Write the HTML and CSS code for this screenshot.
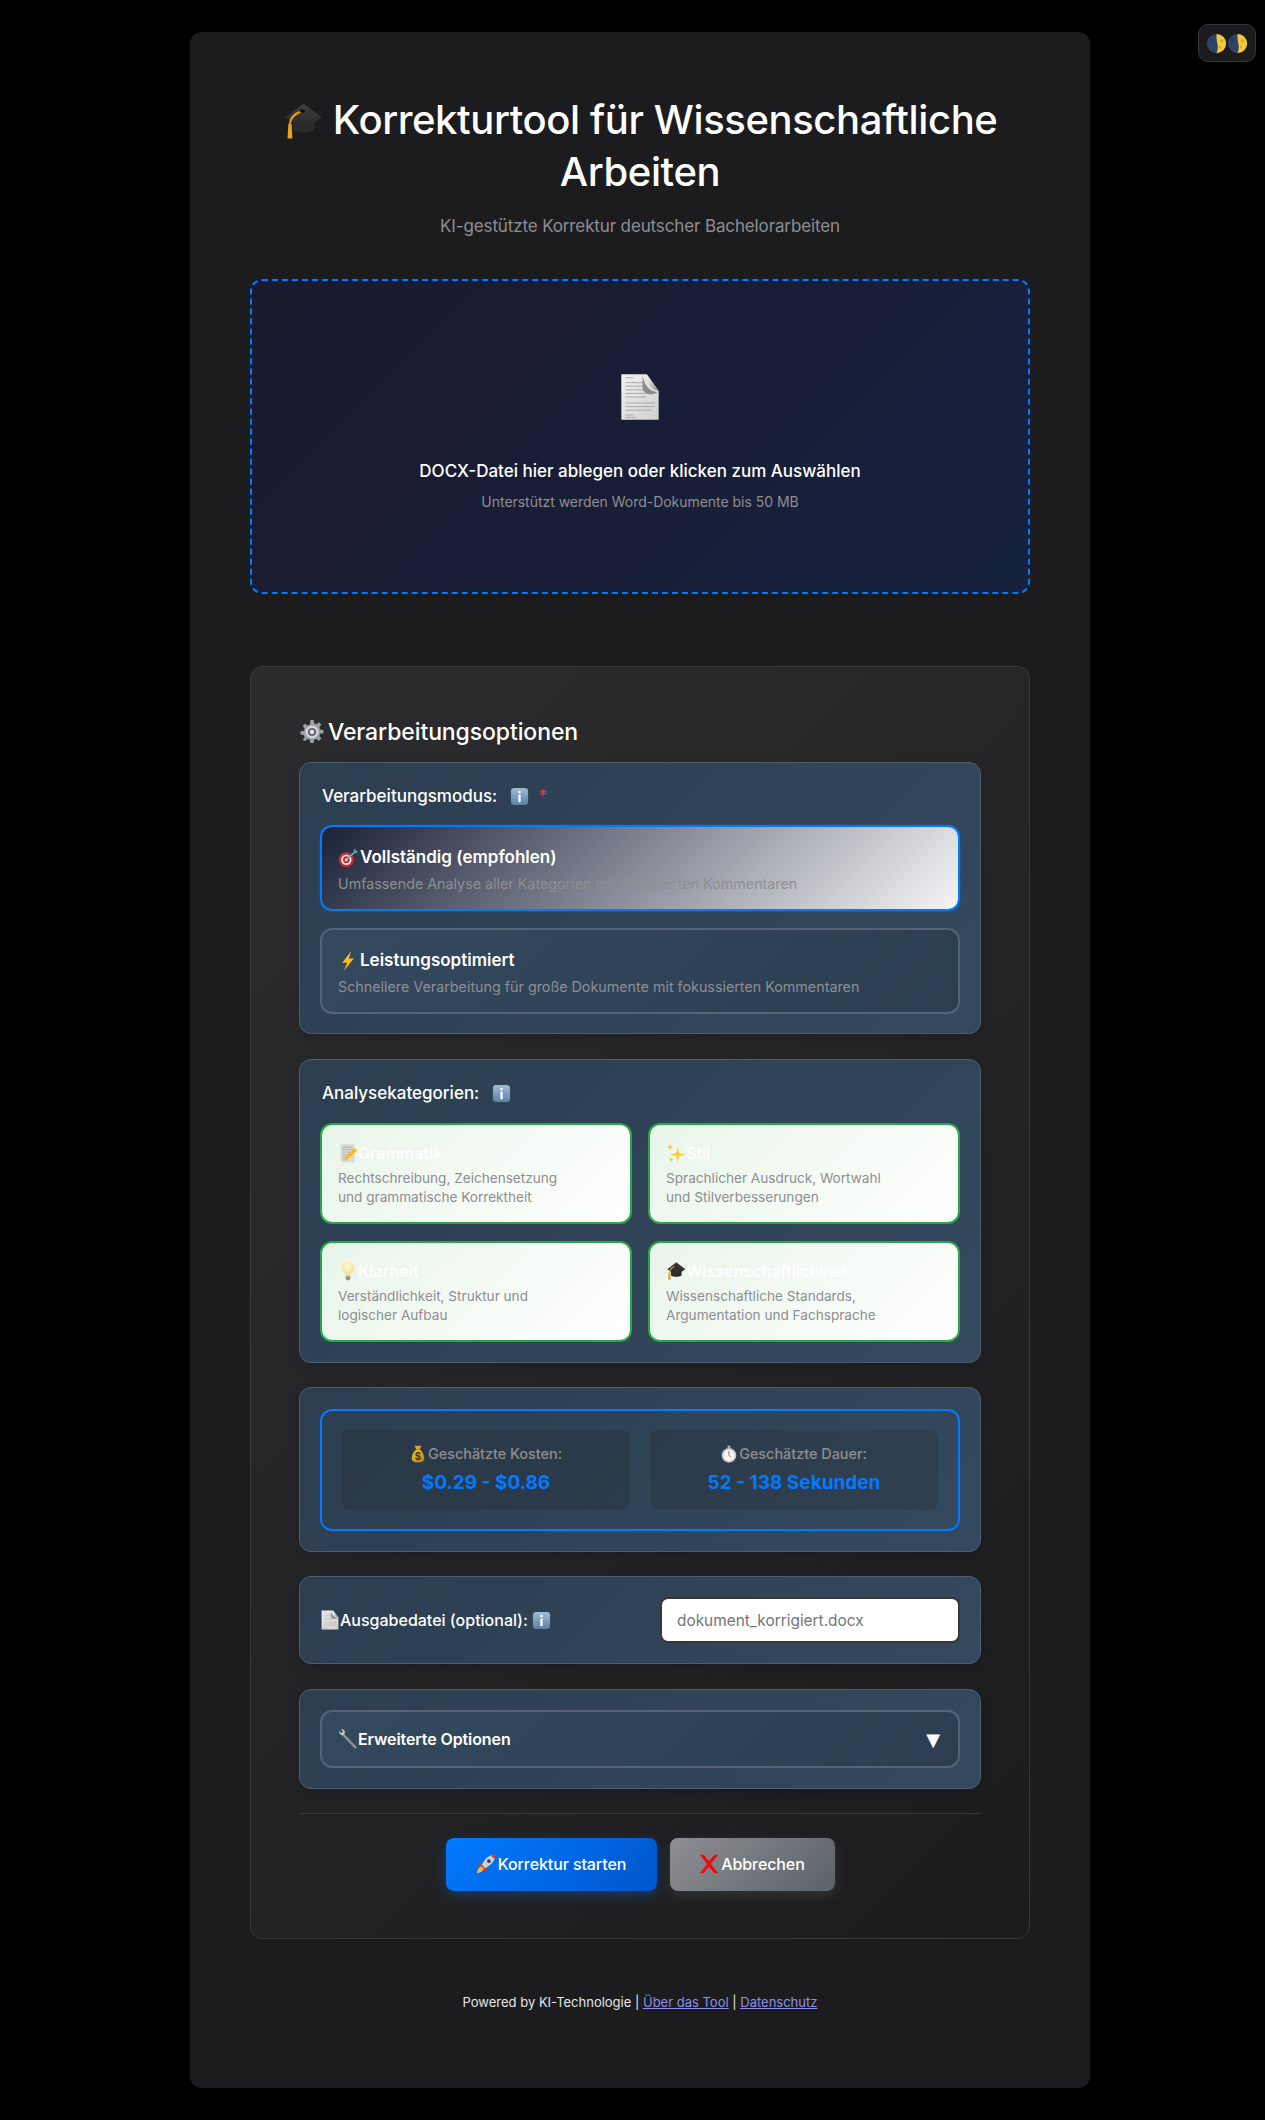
FILE: index.html
```html
<!DOCTYPE html>
<html lang="de">
<head>
<meta charset="utf-8">
<title>Korrekturtool für Wissenschaftliche Arbeiten</title>
<link rel="stylesheet" href="styles.css">
</head>
<body>
<svg class="defs" aria-hidden="true">
  <defs>
    <linearGradient id="g-cap" x1="0" y1="0" x2="0" y2="1"><stop offset="0" stop-color="#3e3e40"/><stop offset="1" stop-color="#262628"/></linearGradient>
    <linearGradient id="g-paper" x1="0" y1="0" x2="1" y2="1"><stop offset="0" stop-color="#f2f2f2"/><stop offset="1" stop-color="#cfcfcf"/></linearGradient>
    <linearGradient id="g-fold" x1="0" y1="0" x2="1" y2="1"><stop offset="0" stop-color="#fff"/><stop offset="1" stop-color="#8a8a8a"/></linearGradient>
    <linearGradient id="g-info" x1="0" y1="0" x2="0" y2="1"><stop offset="0" stop-color="#a3bcd6"/><stop offset="1" stop-color="#5b7fa6"/></linearGradient>
    <radialGradient id="g-bulb" cx="0.45" cy="0.35" r="0.7"><stop offset="0" stop-color="#fffbe0"/><stop offset="1" stop-color="#f3d878"/></radialGradient>
    <linearGradient id="g-gold" x1="0" y1="0" x2="1" y2="1"><stop offset="0" stop-color="#f5c33b"/><stop offset="1" stop-color="#b57f14"/></linearGradient>
    <symbol id="cap" viewBox="0 0 32 32">
      <path d="M8 15v8c3 3 13 3 17 0v-8z" fill="#2a2a2b"/>
      <path d="M16.500 2 31 13 16.500 23 2 13z" fill="url(#g-cap)"/>
      <path d="M15 8C10 10 6 13 5.500 18" fill="none" stroke="#e8a01e" stroke-width="1.700"/>
      <ellipse cx="15.500" cy="8" rx="2.200" ry="1.300" fill="#111"/>
      <path d="M4.300 18h2.600l.6 12H3.600z" fill="#e8a01e"/>
    </symbol>
    <symbol id="doc" viewBox="0 0 30 40" preserveAspectRatio="none">
      <path d="M1 1h19l9 14v24H1z" fill="url(#g-paper)"/>
      <path d="M4 4h6M4 8h14M4 11h14M4 14h14M4 17h16M4 20h16M4 25h22M4 28h22M4 31h20M4 35h6M4 37h8" stroke="#a2a2a2" stroke-width=".7"/>
      <path d="M17 2c1 7 4 13 11 14-4 3-9 2-11-2z" fill="#6e6e6e" opacity=".75"/>
      <path d="M20 1c0 7 3 13 9 14z" fill="url(#g-fold)"/>
    </symbol>
    <symbol id="gear" viewBox="0 0 24 24">
      <path d="M10.500 1h3l.5 3 2 .8 2.500-1.800 2.100 2.100-1.800 2.500.8 2 3 .5v3l-3 .5-.8 2 1.800 2.500-2.100 2.100-2.500-1.800-2 .8-.5 3h-3l-.5-3-2-.8-2.500 1.800L3.400 19.400l1.800-2.500-.8-2-3-.5v-3l3-.5.8-2-1.800-2.500L5.500 4.300 8 6.100l2-.8z" fill="#9a9ea5"/>
      <circle cx="12" cy="12" r="6" fill="#d4d6da"/>
      <circle cx="12" cy="12" r="3.800" fill="#63676d"/>
      <circle cx="12" cy="12" r="2" fill="#e4e5e7"/>
    </symbol>
    <symbol id="info" viewBox="0 0 20 20">
      <rect x="1" y="1" width="18" height="18" rx="3.500" fill="url(#g-info)"/>
      <circle cx="10" cy="5.300" r="1.400" fill="#fff"/>
      <rect x="8.800" y="8" width="2.400" height="8" fill="#fff"/>
    </symbol>
    <symbol id="target" viewBox="0 0 24 24">
      <circle cx="10" cy="14" r="9" fill="#d0232b"/>
      <circle cx="10" cy="14" r="6.300" fill="#fbeaea"/>
      <circle cx="10" cy="14" r="4" fill="#d0232b"/>
      <circle cx="10" cy="14" r="1.800" fill="#fbeaea"/>
      <path d="M10 14 21 4" stroke="#5cb8c4" stroke-width="1.800"/>
      <path d="M18 3l3-2 .5 2.500 2.500.5-2 3z" fill="#3fa9b8"/>
    </symbol>
    <symbol id="bolt" viewBox="0 0 16 24">
      <path d="M12 0 1 14h6L3 24 15 9H9z" fill="#f7b92c"/>
    </symbol>
    <symbol id="memo" viewBox="0 0 24 24">
      <rect x="3" y="1" width="17" height="22" fill="#dcdcdc"/>
      <path d="M5 5h13M5 8h13M5 11h13M5 14h9M5 17h6" stroke="#9a9a9a" stroke-width=".8"/>
      <path d="M20 6 23 9 10 21l-4 1 1-4z" fill="#f5b92a"/>
      <path d="M6 22l1-4 3 3z" fill="#e8c79a"/>
    </symbol>
    <symbol id="sparkle" viewBox="0 0 24 24">
      <path d="M14 5l2 7 7 2-7 2-2 7-2-7-7-2 7-2z" fill="#fbd336"/>
      <path d="M5 1l1 3 3 1-3 1-1 3-1-3-3-1 3-1zM6 17l.8 2.200L9 20l-2.200.8L6 23l-.8-2.200L3 20l2.200-.8z" fill="#f7c52c"/>
    </symbol>
    <symbol id="bulb" viewBox="0 0 24 30">
      <path d="M12 1a9.500 9.500 0 0 0-5 17.500c1 1 1.500 3 1.500 4h7c0-1 .5-3 1.500-4A9.500 9.500 0 0 0 12 1z" fill="url(#g-bulb)"/>
      <path d="M8.500 23h7v4l-2 2h-3l-2-2z" fill="#8d8d8d"/>
    </symbol>
    <symbol id="bag" viewBox="0 0 20 26">
      <path d="M5 1h10l-2.500 6h-5z" fill="#d9a32a"/>
      <path d="M7 7h6c4 3 6 8 6 12 0 5-4 6-9 6s-9-1-9-6c0-4 2-9 6-12z" fill="url(#g-gold)"/>
      <text x="10" y="21" text-anchor="middle" class="bag-sign">$</text>
    </symbol>
    <symbol id="watch" viewBox="0 0 22 26">
      <rect x="9" y="1" width="4" height="4" fill="#b0b0b0"/>
      <circle cx="11" cy="15" r="10.500" fill="#c9c9c9"/>
      <circle cx="11" cy="15" r="8" fill="#f7f7f7"/>
      <path d="M11 15V9M11 15l3 3" stroke="#b33" stroke-width="1.200"/>
    </symbol>
    <symbol id="wrench" viewBox="0 0 24 24">
      <path d="M5.500 6 21 22" stroke="#8f949b" stroke-width="2.800" stroke-linecap="round"/>
      <path d="M1.500 2.500 4 5l2-2-2.500-2.500c3-1 5.500 1.500 4.500 5L6.500 7.500C3.500 8 .5 5.500 1.500 2.500z" fill="#c4c7cc"/>
    </symbol>
    <symbol id="rocket" viewBox="0 0 24 24">
      <path d="M2 15 7 10 10 11 6 16zM9 22 14 17 13 14 8 18z" fill="#d8342c"/>
      <path d="M23 1c-7 0-12 4-16 12l4 4c8-4 12-9 12-16z" fill="#c7d3de"/>
      <circle cx="15.500" cy="8.500" r="2.300" fill="#3b3f47"/>
      <path d="M23 1c-2 0-3 .3-5 1l4 4c.7-2 1-3 1-5z" fill="#d8342c"/>
      <path d="M7 15c-3 0-5 3-6 8 5-1 8-3 8-6z" fill="#f6b92c"/>
    </symbol>
    <symbol id="cross" viewBox="0 0 24 24">
      <path d="M1 1h4.500L12 8.500 18.500 1H23L14.300 12 23 23h-4.500L12 15.500 5.500 23H1l8.700-11z" fill="#ef0a0a"/>
    </symbol>
    <symbol id="moon" viewBox="0 0 24 24">
      <circle cx="12" cy="12" r="11" fill="#2f4368"/>
      <path d="M12 1a11 11 0 0 1 0 22c1.500-3 2-7 1-11s-1-8-1-11z" fill="#f4c93a"/>
      <circle cx="18" cy="9" r="1.800" fill="#d9a92a"/>
      <circle cx="16" cy="16" r="1.500" fill="#d9a92a"/>
      <circle cx="6" cy="8" r="1.800" fill="#25365a"/>
    </symbol>
  </defs>
</svg>

<div class="theme-toggle">
  <svg class="ic-moon"><use href="#moon"/></svg>
  <svg class="ic-moon"><use href="#moon"/></svg>
</div>

<main class="container">
  <header class="header">
    <h1 class="title"><svg class="ic-cap"><use href="#cap"/></svg> Korrekturtool für Wissenschaftliche Arbeiten</h1>
    <p class="subtitle">KI-gestützte Korrektur deutscher Bachelorarbeiten</p>
  </header>

  <section class="dropzone">
    <svg class="ic-doc"><use href="#doc"/></svg>
    <p class="drop-title">DOCX-Datei hier ablegen oder klicken zum Auswählen</p>
    <p class="drop-sub">Unterstützt werden Word-Dokumente bis 50 MB</p>
  </section>

  <section class="panel">
    <h2 class="panel-title"><svg class="ic-gear"><use href="#gear"/></svg> Verarbeitungsoptionen</h2>

    <div class="group group-mode">
      <div class="group-label">Verarbeitungsmodus: <svg class="ic-info info-gap"><use href="#info"/></svg><span class="req">*</span></div>
      <div class="modes">
        <div class="mode mode-active">
          <div class="mode-title"><svg class="ic-s"><use href="#target"/></svg>Vollständig (empfohlen)</div>
          <div class="mode-desc">Umfassende Analyse aller Kategorien mit detaillierten Kommentaren</div>
        </div>
        <div class="mode">
          <div class="mode-title"><svg class="ic-s"><use href="#bolt"/></svg>Leistungsoptimiert</div>
          <div class="mode-desc">Schnellere Verarbeitung für große Dokumente mit fokussierten Kommentaren</div>
        </div>
      </div>
    </div>

    <div class="group group-cats">
      <div class="group-label">Analysekategorien: <svg class="ic-info info-gap"><use href="#info"/></svg></div>
      <div class="cats">
        <div class="cat">
          <div class="cat-title"><svg class="ic-c"><use href="#memo"/></svg>Grammatik</div>
          <div class="cat-desc">Rechtschreibung, Zeichensetzung<br>und grammatische Korrektheit</div>
        </div>
        <div class="cat">
          <div class="cat-title"><svg class="ic-c"><use href="#sparkle"/></svg>Stil</div>
          <div class="cat-desc">Sprachlicher Ausdruck, Wortwahl<br>und Stilverbesserungen</div>
        </div>
        <div class="cat">
          <div class="cat-title"><svg class="ic-c"><use href="#bulb"/></svg>Klarheit</div>
          <div class="cat-desc">Verständlichkeit, Struktur und<br>logischer Aufbau</div>
        </div>
        <div class="cat">
          <div class="cat-title"><svg class="ic-c"><use href="#cap"/></svg>Wissenschaftlichkeit</div>
          <div class="cat-desc">Wissenschaftliche Standards,<br>Argumentation und Fachsprache</div>
        </div>
      </div>
    </div>

    <div class="group">
      <div class="estimate">
        <div class="stat">
          <div class="stat-label"><svg class="ic-xs"><use href="#bag"/></svg>Geschätzte Kosten:</div>
          <div class="stat-value">$0.29 - $0.86</div>
        </div>
        <div class="stat">
          <div class="stat-label"><svg class="ic-xs"><use href="#watch"/></svg>Geschätzte Dauer:</div>
          <div class="stat-value">52 - 138 Sekunden</div>
        </div>
      </div>
    </div>

    <div class="group output">
      <label class="output-label" for="out"><svg class="ic-file"><use href="#doc"/></svg>Ausgabedatei (optional): <svg class="ic-info"><use href="#info"/></svg></label>
      <input class="output-input" id="out" type="text" placeholder="dokument_korrigiert.docx">
    </div>

    <div class="group">
      <div class="advanced">
        <span class="adv-label"><svg class="ic-c"><use href="#wrench"/></svg>Erweiterte Optionen</span>
        <span class="adv-arrow">▼</span>
      </div>
    </div>

    <div class="actions">
      <button class="btn btn-primary" type="button"><svg class="ic-s"><use href="#rocket"/></svg>Korrektur starten</button>
      <button class="btn btn-secondary" type="button"><svg class="ic-s"><use href="#cross"/></svg>Abbrechen</button>
    </div>
  </section>

  <footer class="footer">Powered by KI-Technologie | <a href="#">Über das Tool</a> | <a href="#">Datenschutz</a></footer>
</main>
</body>
</html>
```

FILE: styles.css
```css
* { box-sizing: border-box; }

html, body { margin: 0; background: #000; }

body {
  font-family: Inter, "Liberation Sans", sans-serif;
  color: #fff;
  padding: 32px 175px 32px 190px;
}

.defs { display: block; width: 0; height: 0; }

.bag-sign { font: 700 15px "Liberation Sans", sans-serif; fill: #4a3206; }

.theme-toggle {
  position: absolute;
  top: 24px;
  right: 9px;
  width: 58px;
  height: 38px;
  display: flex;
  align-items: center;
  justify-content: center;
  background: #1c1c1e;
  border: 1px solid #38383a;
  border-radius: 10px;
}
.ic-moon { width: 21px; height: 21px; }

.container {
  width: 900px;
  height: 2056px;
  background: #1c1c1e;
  border-radius: 12px;
  padding: 62px 60px 0;
}

.header { text-align: center; }
.title {
  margin: 0;
  font-size: 40px;
  line-height: 52px;
  font-weight: 500;
  letter-spacing: -0.4px;
}
.ic-cap { width: 40px; height: 40px; vertical-align: -7px; }
.subtitle {
  margin: 16px 0 0;
  font-size: 17px;
  line-height: 24px;
  letter-spacing: -0.13px;
  color: #8e8e93;
}

.dropzone {
  margin-top: 41px;
  height: 315px;
  border: 2px dashed #007aff;
  border-radius: 12px;
  background: linear-gradient(135deg, #1a1a2e, #16213e);
  display: flex;
  flex-direction: column;
  align-items: center;
  padding-top: 92px;
}
.ic-doc { width: 40px; height: 48px; display: block; }
.drop-title { margin: 38px 0 0; font-size: 17px; line-height: 24px; font-weight: 500; }
.drop-sub { margin: 9px 0 0; font-size: 14px; line-height: 20px; letter-spacing: -0.03px; color: #8e8e93; }

.panel {
  margin-top: 72px;
  height: 1273px;
  border: 1px solid #38383a;
  border-radius: 12px;
  background: linear-gradient(135deg, #2c2c2e, #1c1c1e);
  padding: 48px;
}
.panel-title {
  margin: 0 0 13px;
  font-size: 23px;
  line-height: 34px;
  font-weight: 500;
  letter-spacing: -0.1px;
  display: flex;
  align-items: center;
  gap: 3px;
}
.ic-gear { width: 26px; height: 26px; }

.group {
  border: 1px solid #4f5f73;
  border-radius: 12px;
  background: linear-gradient(135deg, #2c3e50, #34495e);
  padding: 20px;
  margin-bottom: 24px;
  box-shadow: 0 4px 12px rgba(0, 0, 0, .15);
}
.group-mode { padding-bottom: 19px; margin-bottom: 25px; }
.group-label {
  font-size: 17px;
  line-height: 26px;
  font-weight: 500;
  padding-left: 2px;
  display: flex;
  align-items: center;
  margin-bottom: 16px;
}
.group-cats .group-label { margin-bottom: 17px; }
.ic-info { width: 19px; height: 19px; }
.info-gap { margin-left: 13px; }
.req { color: #dc3545; margin-left: 9px; }

.modes { display: flex; flex-direction: column; gap: 17px; }
.mode {
  height: 86px;
  border: 2px solid #566375;
  border-radius: 12px;
  padding: 17px 16px 0;
  background: linear-gradient(135deg, #34495e, #2c3e50);
}
.mode-active {
  border-color: #007aff;
  background: linear-gradient(135deg, #1a2238, #f5f5f7);
  box-shadow: 0 0 0 1px rgba(0, 122, 255, .15);
}
.mode-title {
  font-size: 17px;
  line-height: 27px;
  font-weight: 600;
  margin-bottom: 3px;
  display: flex;
  align-items: center;
}
.mode-desc { font-size: 14.3px; line-height: 20px; color: #8e8e93; }
.ic-s { width: 20px; height: 20px; margin-right: 2px; flex: none; }
.ic-c { width: 20px; height: 20px; flex: none; }
.ic-file { width: 18px; height: 20px; margin: 0 1px 0 1px; flex: none; }
.ic-xs { width: 16px; height: 18px; margin-right: 2px; vertical-align: -4px; }

.cats { display: grid; grid-template-columns: 1fr 1fr; gap: 17px 16px; }
.cat {
  height: 101px;
  border: 2px solid #28a745;
  border-radius: 12px;
  padding: 16px 16px 0;
  background: linear-gradient(135deg, #e8f5e9, #fff);
}
.cat-title {
  font-size: 16px;
  line-height: 24px;
  font-weight: 600;
  margin-bottom: 4px;
  display: flex;
  align-items: center;
}
.cat-desc { font-size: 13.6px; line-height: 19px; color: #8e8e93; }

.estimate {
  margin-top: 1px;
  border: 2px solid #007aff;
  border-radius: 12px;
  padding: 19px 20px;
  display: grid;
  grid-template-columns: 1fr 1fr;
  gap: 20px;
}
.stat {
  height: 80px;
  border-radius: 8px;
  background: rgba(28, 28, 30, .2);
  text-align: center;
  padding-top: 14px;
}
.stat-label { font-size: 14.4px; line-height: 20px; font-weight: 500; color: #8e8e93; }
.stat-value { margin-top: 5px; font-size: 19px; line-height: 28px; font-weight: 700; color: #007aff; }

.output {
  display: flex;
  align-items: center;
  justify-content: space-between;
  margin-bottom: 25px;
}
.output-label { font-size: 16px; font-weight: 500; display: flex; align-items: center; }
.output-label .ic-info { margin-left: 4px; }
.output-input {
  width: 300px;
  height: 46px;
  border: 2px solid #38383a;
  border-radius: 8px;
  background: #fff;
  padding: 0 15px;
  font: 15.4px Inter, "Liberation Sans", sans-serif;
}
.output-input::placeholder { color: #757575; opacity: 1; }

.advanced {
  height: 58px;
  border: 2px solid #566375;
  border-radius: 12px;
  padding: 0 16px;
  display: flex;
  align-items: center;
  justify-content: space-between;
  background: linear-gradient(135deg, #34495e, #2c3e50);
}
.adv-label { font-size: 16px; font-weight: 600; letter-spacing: -0.1px; display: flex; align-items: center; }
.adv-arrow { font-size: 18px; margin-right: 2px; font-family: "DejaVu Sans", sans-serif; }

.actions {
  border-top: 1px solid #38383a;
  padding-top: 24px;
  display: flex;
  justify-content: center;
  gap: 13px;
}
.btn {
  height: 53px;
  border: 0;
  border-radius: 8px;
  color: #fff;
  font: 500 16px Inter, "Liberation Sans", sans-serif;
  letter-spacing: -0.1px;
  padding: 0 0 2px;
  display: flex;
  align-items: center;
  justify-content: center;
}
.btn-primary {
  width: 211px;
  background: linear-gradient(135deg, #007aff, #0056cc);
  box-shadow: 0 4px 12px rgba(0, 122, 255, .3);
}
.btn-secondary {
  width: 165px;
  background: linear-gradient(135deg, #8e8e93, #5a6268);
  box-shadow: 0 4px 12px rgba(142, 142, 147, .2);
}

.footer {
  margin-top: 53px;
  text-align: center;
  font-size: 13px;
  line-height: 20px;
  color: #e5e5e7;
}
.footer a { color: #8f8fe8; }
```
